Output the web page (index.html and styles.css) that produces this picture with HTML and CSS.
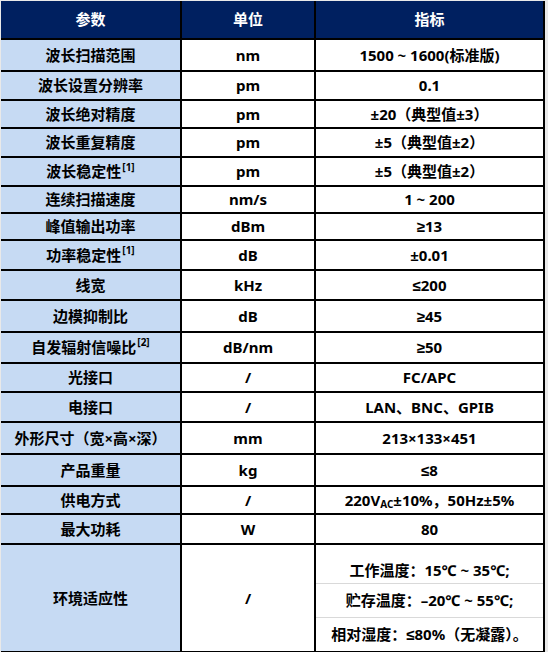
FILE: index.html
```html
<!DOCTYPE html>
<html lang="zh">
<head>
<meta charset="utf-8">
<link rel="stylesheet" href="styles.css">
</head>
<body>
<div class="spec">
  <div class="c h">参数</div><div class="c h">单位</div><div class="c h">指标</div>
  <div class="c k">波长扫描范围</div><div class="c v">nm</div><div class="c v">1500 ~ 1600(标准版)</div>
  <div class="c k">波长设置分辨率</div><div class="c v">pm</div><div class="c v">0.1</div>
  <div class="c k">波长绝对精度</div><div class="c v">pm</div><div class="c v">±20（典型值±3）</div>
  <div class="c k">波长重复精度</div><div class="c v">pm</div><div class="c v">±5（典型值±2）</div>
  <div class="c k">波长稳定性<sup>[1]</sup></div><div class="c v">pm</div><div class="c v">±5（典型值±2）</div>
  <div class="c k">连续扫描速度</div><div class="c v">nm/s</div><div class="c v">1 ~ 200</div>
  <div class="c k">峰值输出功率</div><div class="c v">dBm</div><div class="c v">≥13</div>
  <div class="c k">功率稳定性<sup>[1]</sup></div><div class="c v">dB</div><div class="c v">±0.01</div>
  <div class="c k">线宽</div><div class="c v">kHz</div><div class="c v">≤200</div>
  <div class="c k">边模抑制比</div><div class="c v">dB</div><div class="c v">≥45</div>
  <div class="c k">自发辐射信噪比<sup>[2]</sup></div><div class="c v">dB/nm</div><div class="c v">≥50</div>
  <div class="c k">光接口</div><div class="c v">/</div><div class="c v">FC/APC</div>
  <div class="c k">电接口</div><div class="c v">/</div><div class="c v">LAN、BNC、GPIB</div>
  <div class="c k">外形尺寸（宽×高×深）</div><div class="c v">mm</div><div class="c v">213×133×451</div>
  <div class="c k">产品重量</div><div class="c v">kg</div><div class="c v">≤8</div>
  <div class="c k">供电方式</div><div class="c v">/</div><div class="c v">220V<sub>AC</sub>±10%，50Hz±5%</div>
  <div class="c k">最大功耗</div><div class="c v">W</div><div class="c v">80</div>
  <div class="c k">环境适应性</div><div class="c v">/</div>
  <div class="multi">
    <div class="sub first">工作温度：15℃ ~ 35℃;</div>
    <div class="sub">贮存温度：–20℃ ~ 55℃;</div>
    <div class="sub">相对湿度：≤80%（无凝露）。</div>
  </div>
</div>
</body>
</html>
```

FILE: styles.css
```css
html, body {
  margin: 0;
  padding: 0;
}
body {
  background: #e9e9e9;
  font-family: "Noto Sans", "Liberation Sans", "Noto Sans CJK SC", sans-serif;
  font-weight: 700;
  font-size: 15px;
  color: #000;
  padding: 1px 0 0 1px;
  width: 548px;
  height: 652px;
  box-sizing: border-box;
  overflow: hidden;
}
.spec {
  display: grid;
  grid-template-columns: 179px 132px 227px;
  grid-template-rows: 37px 30px 27px 26px 27px 27px 25px 25px 28px 28px 30px 29px 27px 28px 30px 30px 26px 28px 106px;
  gap: 2px;
  background: #000;
  padding: 0 2px 2px 0;
  width: max-content;
}
.c {
  display: flex;
  align-items: center;
  justify-content: center;
  white-space: nowrap;
  line-height: 1;
}
.h {
  background: #002060;
  color: #fff;
}
.k {
  background: #c6daf3;
}
.v {
  background: #fff;
}
sup {
  font-size: 10px;
  font-weight: 700;
  align-self: flex-start;
  margin-top: 4px;
  margin-left: 1px;
  line-height: 1;
}
.c sub {
  font-size: 10px;
  line-height: 1;
  position: relative;
  top: 4px;
  vertical-align: baseline;
}
.multi {
  background: #fff;
  display: flex;
  flex-direction: column;
}
.sub {
  height: 33px;
  display: flex;
  align-items: center;
  justify-content: center;
  border-top: 1px solid #d9d9d9;
  white-space: nowrap;
  line-height: 1;
}
.sub.first {
  height: 26px;
  padding-top: 12px;
  border-top: none;
}
```
